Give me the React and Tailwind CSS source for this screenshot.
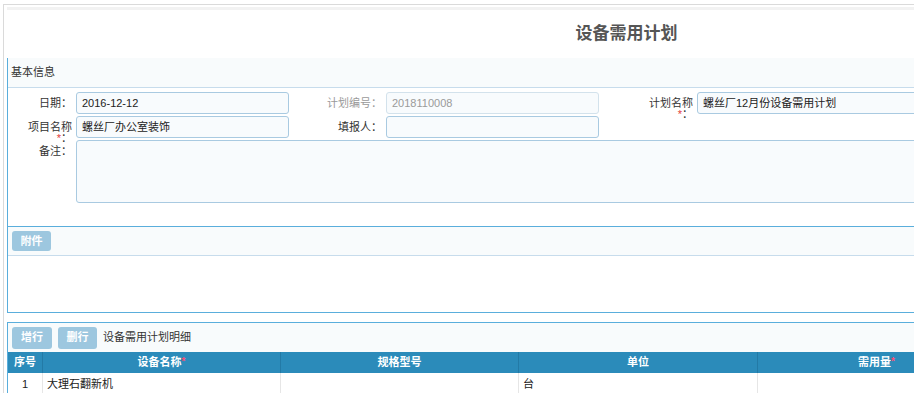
import React from "react";

const font = "font-['Liberation_Sans','Noto_Sans_CJK_SC',sans-serif]";

function Label({ children, req, muted, top }) {
  return (
    <div className={`flex justify-end items-start pr-[4px] min-h-0 overflow-visible ${top ? "pt-[6px]" : "pt-[6px]"}`}>
      <div className={`w-[56px] text-right leading-[11px] ${muted ? "text-[#9a9a9a]" : "text-[#333]"}`}>
        {children}
        {req && <span className="text-[#e23a3a] text-[11px]">*</span>}
        ：
      </div>
    </div>
  );
}

function Field({ value, muted, className = "" }) {
  return (
    <div
      className={`h-[22px] border border-[#a9cae1] rounded-[3px] bg-[#f8fbfd] px-[5px] flex items-center ${muted ? "text-[#9a9a9a] border-[#d3e2ec]" : "text-[#222]"} ${className}`}
    >
      {value}
    </div>
  );
}

function Btn({ children, className = "" }) {
  return (
    <div className={`bg-[#9dc7df] text-white font-bold rounded-[3px] flex items-center justify-center ${className}`}>
      {children}
    </div>
  );
}

export default function App() {
  const cols = [
    { t: "序号", w: "w-[34px]" },
    { t: "设备名称", w: "w-[238px]", req: true },
    { t: "规格型号", w: "w-[238px]" },
    { t: "单位", w: "w-[239px]" },
    { t: "需用量", w: "w-[238px]", req: true },
  ];
  const row = ["1", "大理石翻新机", "", "台", ""];

  return (
    <div className={`w-[914px] h-[393px] overflow-hidden bg-white text-[11px] text-[#333] ${font}`}>
      <div className="ml-[3px] mt-[4px] w-[1243px] border-l border-t border-[#dadada] pl-[3px]">
        {/* title */}
        <div className="mt-[2px] h-[3px] bg-[#f2f2f2]" />
        <div className="h-[48px] flex items-center justify-center">
          <h1 className="text-[17px] font-bold text-[#555]">设备需用计划</h1>
        </div>

        {/* basic info */}
        <div className="border-l border-[#5aaedc]">
          <div className="h-[30px] bg-[#f8fbfc] border-b border-[#c7dcec] flex items-center pl-[3px]">
            基本信息
          </div>
          <div className="bg-white pt-[4px] pb-[23px] border-b border-[#5aaedc]">
            <div className="grid grid-cols-[68px_213px_97px_213px_98px_420px] grid-rows-[22px_22px_63px] gap-y-[2px]">
              <Label>日期</Label>
              <Field value="2016-12-12" />
              <Label muted>计划编号</Label>
              <Field value="2018110008" muted />
              <Label req>计划名称</Label>
              <Field value="螺丝厂12月份设备需用计划" />

              <Label req>项目名称</Label>
              <Field value="螺丝厂办公室装饰" />
              <Label>填报人</Label>
              <Field value="" />
              <div />
              <div />

              <Label top>备注</Label>
              <div className="col-span-5 h-[63px] border border-[#a9cae1] rounded-[3px] bg-[#f8fbfd]" />
            </div>
          </div>

          {/* attachments */}
          <div className="h-[29px] bg-[#f8fbfc] border-b border-[#c7dcec] flex items-center pl-[4px]">
            <Btn className="w-[39px] h-[20px]">附件</Btn>
          </div>
          <div className="h-[57px] bg-white border-b border-[#5aaedc]" />
        </div>

        <div className="h-[9px]" />

        {/* detail */}
        <div className="border-l border-t border-[#5aaedc]">
          <div className="h-[29px] bg-[#f8fbfc] flex items-center pl-[4px] gap-[6px]">
            <Btn className="w-[40px] h-[22px]">增行</Btn>
            <Btn className="w-[39px] h-[22px]">删行</Btn>
            <span className="text-[#333]">设备需用计划明细</span>
          </div>
          <div className="flex h-[21px] bg-[#2b8bba] text-white font-bold">
            {cols.map((c, i) => (
              <div
                key={i}
                className={`${c.w} flex items-center justify-center ${i > 0 ? "border-l border-[#237aa6]" : ""}`}
              >
                {c.t}
                {c.req && <span className="text-[#ff4d73] text-[10px] self-start mt-[2px]">*</span>}
              </div>
            ))}
          </div>
          <div className="flex h-[22px] bg-white text-[#222]">
            {row.map((v, i) => (
              <div
                key={i}
                className={`${cols[i].w} flex items-center ${i === 0 ? "justify-center" : "pl-[4px]"} ${i > 0 ? "border-l border-[#e6e6e6]" : ""}`}
              >
                {v}
              </div>
            ))}
          </div>
        </div>
      </div>
    </div>
  );
}
